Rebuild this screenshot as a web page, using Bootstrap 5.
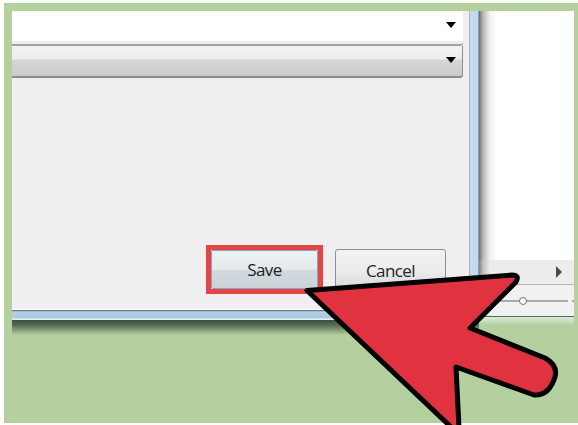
<!DOCTYPE html>
<html lang="en">
<head>
<meta charset="utf-8">
<title>Save dialog</title>
<link href="https://cdn.jsdelivr.net/npm/bootstrap@5.3.0/dist/css/bootstrap.min.css" rel="stylesheet">
<style>
html,body{height:425px;overflow:hidden;background:#fff}
.stage{width:574px;height:420px;margin:3px 0 0 4px;background:#b5d09f;padding:8px 4px 0 8px;position:relative;overflow:hidden}
.win{width:467px;flex:none}
.win-body{height:298px}
.dialog{width:458px;flex:none;background:#efefef;border-right:1px solid #b4b4b4}
.field-white,.field-grey{margin-right:6px}
.field-white{height:35px;background:linear-gradient(#fff 30px,#eee 30px);border-bottom:2px solid #a2a2a2;padding:0 7px 6px 0;border-radius:0 0 3px 0}
.field-grey{height:32px;background:linear-gradient(#f3f3f3 0,#ececec 42%,#d6d6d6 48%,#cbcbcb 100%);border-bottom:2px solid #8a8a8a;border-right:1px solid #8f8f8f;border-radius:0 0 3px 0;padding:0 6px 3px 0}
.caret-down{width:0;height:0;border-left:5.5px solid transparent;border-right:5.5px solid transparent;border-top:6px solid #000}
.dialog-foot{padding:0 23px 15px 0;gap:12px}
.act{font:17px "Open Sans","Noto Sans",sans-serif;letter-spacing:-.6px;color:#222;padding:0;border-radius:3px}
.save-ring{border:5px solid #e64547;background:#f0f0f0}
.act-save{width:107px;height:39px;background:linear-gradient(#eef2f5,#e4e9ec 48%,#d2d9dd 54%,#cbd3d8);border:1px solid #7ea7c6;border-radius:2px}
.act-cancel{width:111px;height:42px;margin-bottom:3px;background:linear-gradient(#f3f3f3,#ececec 50%,#d8d8d8);border:1px solid #8e8e8e}
.glass{flex:1;background:linear-gradient(90deg,#c3dcf1 0,#c1daf0 85%,#6f7a84 100%)}
.frame-low{height:11px;background:linear-gradient(#fff 0,#fff 9%,#6e7a86 10%,#6e7a86 22%,#b6d1e4 23%,#a9c9df 80%,#e4eff2 90%)}
.frame-shadow{height:15px;background:linear-gradient(#3e4e44,#5a6b55 35%,#b5d09f)}
.side{flex:1;min-width:0}
.side-main{height:305px;background:linear-gradient(90deg,#6f6f6f 0,#b5b5b5 4px,#f2f2f2 11px,#fff 18px)}
.scroll-row{height:25px;background:linear-gradient(90deg,#7f7f7f 0,#c0c0c0 4px,#ececec 11px);border-bottom:1px solid #b8b8b8;padding-right:12px}
.zoom-row{height:31px;background:linear-gradient(90deg,#8a8a8a 0,#c8c8c8 4px,#f1f1f1 11px);padding-left:16px;gap:4px}
.caret-right{width:0;height:0;border-top:6px solid transparent;border-bottom:6px solid transparent;border-left:6px solid #4c4c4c}
.track{height:2px;width:73px;background:#aaa;position:relative}
.tick{height:2px;width:2px;background:#aaa}
.knob{position:absolute;left:24px;top:-3px;width:8px;height:8px;border-radius:50%;background:#fff;border:1px solid #777}
.side-foot{height:9px;border-top:1px solid #59685a;background:linear-gradient(#dcebdc,#b5d09f)}
.pointer{position:absolute;left:0;top:0;width:578px;height:425px;pointer-events:none}
</style>
</head>
<body>
<div class="stage d-flex align-items-start">
  <div class="win">
    <div class="win-body d-flex">
      <div class="dialog d-flex flex-column">
        <div class="field-white d-flex justify-content-end align-items-center"><span class="caret-down"></span></div>
        <div class="field-grey d-flex justify-content-end align-items-center"><span class="caret-down"></span></div>
        <div class="dialog-foot d-flex justify-content-end align-items-end flex-grow-1">
          <div class="save-ring d-flex"><button class="btn act act-save" type="button">Save</button></div>
          <button class="btn act act-cancel" type="button">Cancel</button>
        </div>
      </div>
      <div class="glass"></div>
    </div>
    <div class="frame-low"></div>
    <div class="frame-shadow"></div>
  </div>
  <div class="side">
    <div class="side-main d-flex flex-column justify-content-end">
      <div class="scroll-row d-flex justify-content-end align-items-center"><span class="caret-right"></span></div>
      <div class="zoom-row d-flex align-items-center"><div class="track"><span class="knob"></span></div><span class="tick"></span></div>
    </div>
    <div class="side-foot"></div>
  </div>
</div>
<svg class="pointer" viewBox="0 0 578 425" aria-hidden="true">
  <path d="M307 290.5 L512 275 Q520 275 516 282 L470 328 L545 358 Q558 365 555 377 Q549 396 534 395 L456 367 L459 428 L452 428 Z" fill="#e13240" stroke="#000" stroke-width="5" stroke-linejoin="round"/>
</svg>
</body>
</html>
